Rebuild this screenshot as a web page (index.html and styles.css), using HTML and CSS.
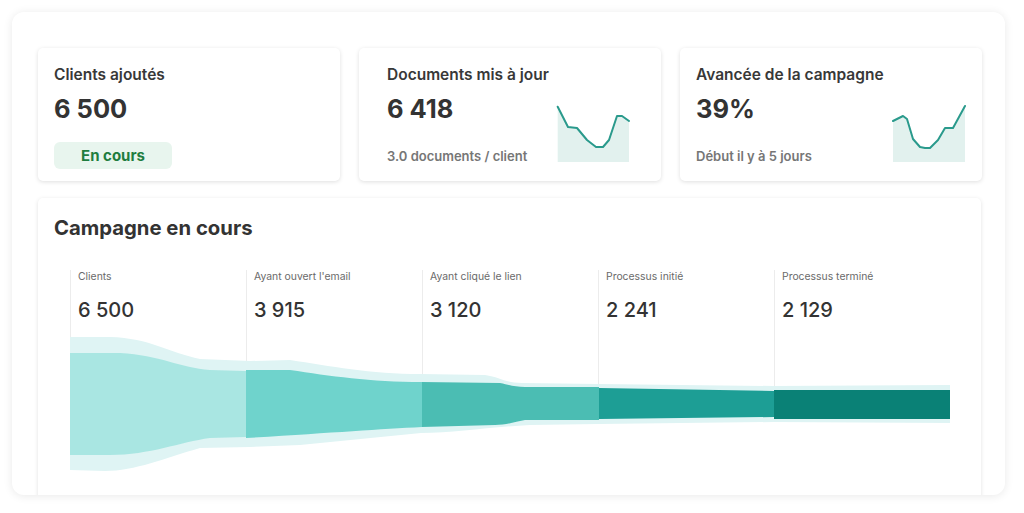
FILE: index.html
```html
<!DOCTYPE html>
<html lang="fr">
<head>
<meta charset="utf-8">
<title>Campagne</title>
<link rel="stylesheet" href="styles.css">
</head>
<body>
<div class="panel">
  <div class="stats">
    <div class="card">
      <div class="card-text">
        <div class="card-title">Clients ajoutés</div>
        <div class="card-value">6 500</div>
        <div class="badge">En cours</div>
      </div>
    </div>
    <div class="card card-docs">
      <div class="card-text">
        <div class="card-title">Documents mis à jour</div>
        <div class="card-value">6 418</div>
        <div class="card-sub">3.0 documents / client</div>
      </div>
      <svg class="spark" viewBox="556 103 74 60" width="74" height="60">
        <path class="spark-area" d="M557.7,106.7 L568,127 L577,128 L587,140 L596,147 L603,147 L609,140 L617,116 L622,116 L629,121 L629,162 L557.7,162 Z"/>
        <path class="spark-line" d="M557.7,106.7 L568,127 L577,128 L587,140 L596,147 L603,147 L609,140 L617,116 L622,116 L629,121"/>
      </svg>
    </div>
    <div class="card card-progress">
      <div class="card-text">
        <div class="card-title">Avancée de la campagne</div>
        <div class="card-value">39%</div>
        <div class="card-sub">Début il y à 5 jours</div>
      </div>
      <svg class="spark" viewBox="891 103 74 60" width="74" height="60">
        <path class="spark-area" d="M892,121 L902,116 L906,119 L912,139 L919,147 L924,148 L929,148 L937,140 L944,128 L952,128 L964,106 L964,162 L892,162 Z"/>
        <path class="spark-line" d="M892,121 L902,116 L906,119 L912,139 L919,147 L924,148 L929,148 L937,140 L944,128 L952,128 L964,106"/>
      </svg>
    </div>
  </div>

  <div class="campaign">
    <h2 class="campaign-title">Campagne en cours</h2>
    <div class="funnel">
      <div class="step">
        <div class="step-label">Clients</div>
        <div class="step-value">6 500</div>
      </div>
      <div class="step">
        <div class="step-label">Ayant ouvert l'email</div>
        <div class="step-value">3 915</div>
      </div>
      <div class="step">
        <div class="step-label">Ayant cliqué le lien</div>
        <div class="step-value">3 120</div>
      </div>
      <div class="step">
        <div class="step-label">Processus initié</div>
        <div class="step-value">2 241</div>
      </div>
      <div class="step">
        <div class="step-label">Processus terminé</div>
        <div class="step-value">2 129</div>
      </div>
      <svg class="funnel-chart" viewBox="70 330 880 150" width="880" height="150">
        <path class="band" d="M70,337 L110,337 C150,338 170,353 200,359 L250,361 L290,360 C330,366 370,374 421,374 L485,375 C500,377 505,383 522,383 L599,384 L773,386 L950,385 L950,423 L773,422 L599,424 L530,425 C490,427 455,433 421,433 L300,445 L250,447 L200,448 C165,458 135,471 105,471 L70,470 Z"/>
        <path class="c1" d="M70,353 L120,353 C160,355 180,368 210,370 L246,371 L246,437 L210,438 C180,442 150,455 110,455 L70,455 Z"/>
        <path class="c2" d="M246,370 L290,370 C330,376 370,382 422,382 L422,427 C380,429 330,433 246,438 Z"/>
        <path class="c3" d="M422,382 L500,383 C510,385 515,387 525,387 L599,387 L599,420 L525,420 C515,422 505,425 495,425 L422,427 Z"/>
        <path class="c4" d="M599,388 L774,391 L774,417 L599,419 Z"/>
        <path class="c5" d="M774,390 L950,390 L950,419 L774,419 Z"/>
      </svg>
    </div>
  </div>
</div>
</body>
</html>
```

FILE: styles.css
```css
* { box-sizing: border-box; }

html, body {
  margin: 0;
  padding: 0;
  background: #ffffff;
  font-family: Inter, "Liberation Sans", sans-serif;
  color: #333333;
}

.panel {
  margin: 12px;
  width: 993px;
  height: 483px;
  border-radius: 12px;
  background: #ffffff;
  box-shadow: 0 1px 10px rgba(0, 0, 0, 0.09);
  overflow: hidden;
  padding: 36px 24px 0 26px;
}

.stats {
  display: grid;
  grid-template-columns: repeat(3, 302px);
  column-gap: 19px;
}

.card {
  height: 133px;
  background: #ffffff;
  border-radius: 5px;
  box-shadow: 0 1px 4px rgba(0, 0, 0, 0.13);
  padding: 17px 16px 0 16px;
  display: flex;
  justify-content: space-between;
}

.card-docs { padding-right: 31px; padding-left: 28px; }
.card-progress { padding-right: 16px; padding-left: 16px; }

.card-title {
  font-size: 15.5px;
  line-height: 20px;
  font-weight: 600;
  color: #383838;
}

.card-value {
  margin-top: 9px;
  font-size: 25.5px;
  line-height: 30px;
  font-weight: 700;
  color: #333333;
}

.badge {
  margin-top: 18px;
  width: 118px;
  height: 27px;
  border-radius: 6px;
  background: #e8f5ee;
  color: #1f7d3f;
  font-size: 15px;
  font-weight: 700;
  line-height: 27px;
  text-align: center;
}

.card-sub {
  margin-top: 23px;
  font-size: 13px;
  line-height: 18px;
  font-weight: 600;
  color: #767676;
}

.spark {
  align-self: flex-end;
  margin-bottom: 18px;
  display: block;
}

.spark-area { fill: #e2f1ee; }
.spark-line {
  fill: none;
  stroke: #2a9a8c;
  stroke-width: 2;
  stroke-linejoin: round;
  stroke-linecap: round;
}

.campaign {
  margin-top: 17px;
  height: 330px;
  background: #ffffff;
  border-radius: 5px;
  box-shadow: 0 1px 4px rgba(0, 0, 0, 0.12);
  padding: 17px 16px 0 16px;
}

.campaign-title {
  margin: 0;
  font-size: 20.3px;
  line-height: 26px;
  font-weight: 700;
  color: #333333;
}

.funnel {
  position: relative;
  margin: 29px 0 0 16px;
  width: 880px;
  display: grid;
  grid-template-columns: repeat(5, 176px);
}

.step {
  height: 118px;
  border-left: 1px solid #ececec;
  padding-left: 7px;
}

.step-label {
  font-size: 10.4px;
  line-height: 14px;
  color: #6a6a6a;
}

.step-value {
  margin-top: 14px;
  font-size: 20px;
  line-height: 24px;
  font-weight: 500;
  color: #333333;
}

.funnel-chart {
  position: absolute;
  left: 0;
  top: 60px;
  display: block;
}

.band { fill: #dff4f4; }
.c1 { fill: #a9e6e2; }
.c2 { fill: #6fd3cc; }
.c3 { fill: #4bbdb3; }
.c4 { fill: #1d9e95; }
.c5 { fill: #0a8176; }
```
